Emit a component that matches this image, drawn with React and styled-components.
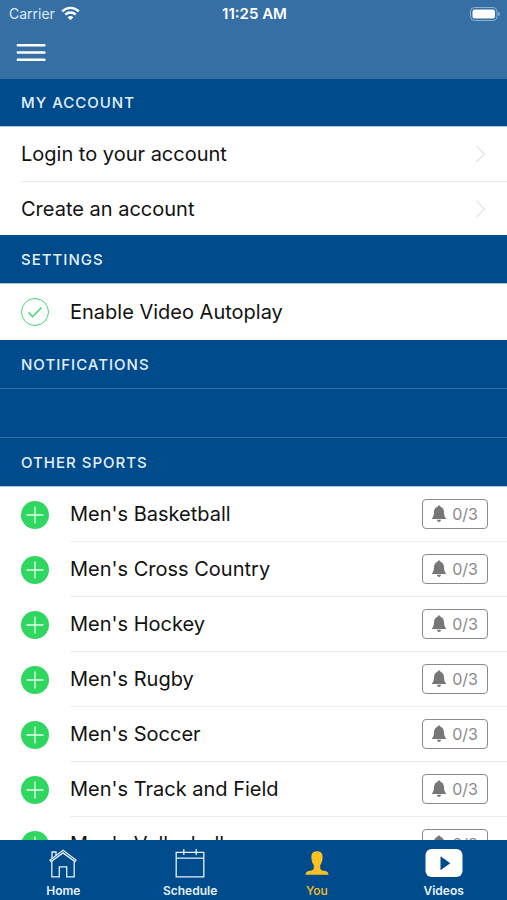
import React, { useState } from 'react'
import styled, { createGlobalStyle } from 'styled-components'

const GlobalStyle = createGlobalStyle`
  * {
    box-sizing: border-box;
  }

  body {
    margin: 0;
    font-family: Inter, 'Liberation Sans', sans-serif;
    background-color: white;
    color: #111111;
  }

  button {
    font-family: inherit;
    cursor: pointer;
  }
`

const Screen = styled.div`
  display: flex;
  flex-direction: column;
  height: 100vh;
`

const TopBar = styled.header`
  flex: none;
  background-color: #356fa4;
  color: white;
`

const StatusBar = styled.div`
  display: grid;
  grid-template-columns: 1fr auto 1fr;
  align-items: center;
  height: 27px;
  padding: 0 7px 0 9px;
  font-size: 14px;
`

const Carrier = styled.div`
  display: flex;
  align-items: center;
  gap: 6px;
  color: #dcebf8;
`

const Time = styled.div`
  font-size: 15px;
  font-weight: 600;
`

const Battery = styled.svg`
  justify-self: end;
`

const MenuButton = styled.button`
  display: block;
  padding: 16px 16px 17px;
  border: none;
  background-color: transparent;
  color: white;

  svg {
    display: block;
  }
`

const Content = styled.main`
  flex: 1;
  min-height: 0;
  overflow-y: auto;
  scrollbar-width: none;
`

const SectionTitle = styled.h2`
  display: flex;
  align-items: center;
  height: 49px;
  margin: 0;
  padding: 0 21px;
  border-bottom: 1px solid ${({ $divided }) => ($divided ? '#3470a5' : '#a9c4dc')};
  background-color: #004b8b;
  color: #e4f0fb;
  font-size: 15px;
  font-weight: 500;
  letter-spacing: 1px;

  &:first-child {
    height: 48px;
  }
`

const EmptySection = styled.div`
  height: 49px;
  border-bottom: 1px solid #3470a5;
  background-color: #004b8b;
`

const List = styled.ul`
  margin: 0;
  padding: 0;
  list-style: none;
`

const AccountItem = styled.li`
  padding-left: 21px;
`

const AccountLink = styled.a`
  display: flex;
  align-items: center;
  justify-content: space-between;
  height: 54px;
  padding-right: 21px;
  color: inherit;
  font-size: 20px;
  text-decoration: none;

  ${AccountItem} + ${AccountItem} & {
    border-top: 1px solid #e9e9ec;
  }
`

const SettingRow = styled.label`
  display: flex;
  align-items: center;
  gap: 21px;
  height: 56px;
  padding: 0 21px;
  font-size: 20px;
  cursor: pointer;
`

const CheckCircle = styled.span`
  display: grid;
  width: 28px;
  height: 28px;

  > * {
    grid-area: 1 / 1;
  }

  svg {
    pointer-events: none;
  }
`

const Checkbox = styled.input`
  appearance: none;
  width: 28px;
  height: 28px;
  margin: 0;
  border: 1px solid #3ddb6c;
  border-radius: 50%;
  cursor: pointer;

  &:not(:checked) + svg {
    visibility: hidden;
  }
`

const SportItem = styled.li`
  display: flex;
  align-items: center;
  gap: 21px;
  padding-left: 21px;
`

const AddButton = styled.button`
  flex: none;
  width: 28px;
  height: 28px;
  padding: 0;
  border: none;
  border-radius: 50%;
  background-color: #2fd760;

  svg {
    display: block;
  }
`

const SportRow = styled.div`
  display: flex;
  flex: 1;
  align-items: center;
  justify-content: space-between;
  height: 55px;
  padding-right: 19px;
  border-bottom: 1px solid #ececee;
  font-size: 20px;
`

const AlertButton = styled.button`
  display: flex;
  align-items: center;
  justify-content: space-between;
  width: 66px;
  height: 30px;
  padding: 0 9px 0 8px;
  border: 1px solid #8b8b8b;
  border-radius: 4px;
  background-color: white;
  color: #8a8a8a;
  font-size: 16px;
`

const TabBar = styled.nav`
  display: grid;
  flex: none;
  grid-template-columns: repeat(4, 1fr);
  height: 60px;
  background-color: #004b8b;
`

const Tab = styled.a`
  display: flex;
  flex-direction: column;
  align-items: center;
  gap: 5px;
  padding-top: 8px;
  color: ${({ $active }) => ($active ? '#fbc123' : '#e6f2fc')};
  font-size: 12px;
  font-weight: ${({ $active }) => ($active ? 500 : 600)};
  line-height: 16px;
  text-decoration: none;

  svg {
    height: 30px;
  }
`

const WifiIcon = () => (
  <svg width="19" height="15" viewBox="0 0 19 15" fill="none" stroke="white" strokeWidth="2.4" aria-hidden="true">
    <path d="M1.2 5.4C6 .7 13 .7 17.8 5.4" />
    <path d="M4.3 8.6C7.2 5.8 11.8 5.8 14.7 8.6" />
    <path d="M9.5 14.2L6.6 11.2Q9.5 8.8 12.4 11.2Z" fill="white" stroke="none" />
  </svg>
)

const BatteryIcon = () => (
  <Battery width="30" height="14" viewBox="0 0 30 14" aria-hidden="true">
    <rect x="0.5" y="0.5" width="26.5" height="13" rx="4" fill="none" stroke="#8fb2d1" />
    <rect x="2.5" y="2.5" width="22.5" height="9" rx="2.2" fill="white" />
    <path d="M28.2 4.8Q30 5.5 30 7T28.2 9.2Z" fill="#8fb2d1" />
  </Battery>
)

const MenuIcon = () => (
  <svg width="30" height="19" viewBox="0 0 30 19" stroke="currentColor" strokeWidth="2.4" strokeLinecap="round" aria-hidden="true">
    <path d="M1.8 2.3H28.5M1.8 9.5H28.5M1.8 16.7H28.5" />
  </svg>
)

const ChevronIcon = () => (
  <svg width="11" height="18" viewBox="0 0 11 18" fill="none" stroke="#e6e7f2" strokeWidth="1.6" aria-hidden="true">
    <path d="M1.5 1L9.5 9L1.5 17" />
  </svg>
)

const CheckIcon = () => (
  <svg width="28" height="28" viewBox="0 0 28 28" fill="none" stroke="#3ddb6c" strokeWidth="1.6" aria-hidden="true">
    <path d="M7.5 14.5L11.6 18.7L20.5 9.5" />
  </svg>
)

const PlusIcon = () => (
  <svg width="28" height="28" viewBox="0 0 28 28" stroke="#e6ffec" strokeWidth="1.3" aria-hidden="true">
    <path d="M14 5.5V22.5M5.5 14H22.5" />
  </svg>
)

const BellIcon = () => (
  <svg width="16" height="18" viewBox="0 0 16 18" fill="#777777" aria-hidden="true">
    <path d="M8 .6C8.9 .6 9.3 1.1 9.4 1.8C11.8 2.5 12.9 4.4 13 7C13.1 10.3 13.6 11.9 15 13.2V14H1V13.2C2.4 11.9 2.9 10.3 3 7C3.1 4.4 4.2 2.5 6.6 1.8C6.7 1.1 7.1 .6 8 .6Z" />
    <path d="M6 14.8H10C9.9 16.2 9.1 16.9 8 16.9S6.1 16.2 6 14.8Z" />
  </svg>
)

const HomeIcon = () => (
  <svg width="28" viewBox="0 0 28 30" fill="none" stroke="currentColor" strokeWidth="1.3" aria-hidden="true">
    <path d="M14 2.3L27 12.1L25.9 13.6L14 4.9L2.1 13.6L1 12.1Z" />
    <path d="M3 10.4V4H7V7.3" />
    <path d="M2.8 13.3V28.8H10.3V18.8H17.7V28.8H25.2V13.3" />
  </svg>
)

const CalendarIcon = () => (
  <svg width="30" viewBox="0 0 30 30" fill="none" stroke="currentColor" strokeWidth="1.3" aria-hidden="true">
    <path d="M1.2 4.3H28.8V28.8H1.2ZM1.2 10.2H28.8M8.8 1V7M21.2 1V7" />
  </svg>
)

const PersonIcon = () => (
  <svg width="24" viewBox="0 0 24 30" fill="currentColor" aria-hidden="true">
    <path d="M12 3.2C15.800 3.200 17.600 5.300 17.600 9.100C17.600 12.800 16.700 15.300 15.200 17.200V20.200C15.400 22.200 17.500 22.500 20.200 23.100C22.500 23.700 23.300 24.800 23.500 26.800H.5C.7 24.800 1.500 23.700 3.800 23.100C6.500 22.500 8.600 22.200 8.800 20.200V17.200C7.300 15.300 6.400 12.800 6.400 9.100C6.400 5.300 8.200 3.200 12 3.200Z" />
  </svg>
)

const VideoIcon = () => (
  <svg width="38" viewBox="0 0 38 30" aria-hidden="true">
    <rect x="0.5" y="1" width="37" height="28" rx="6" fill="white" />
    <path d="M15.5 8.2L25.3 15.2L15.5 22.2Z" fill="#004b8b" />
  </svg>
)

const sports = [
  "Men's Basketball",
  "Men's Cross Country",
  "Men's Hockey",
  "Men's Rugby",
  "Men's Soccer",
  "Men's Track and Field",
  "Men's Volleyball",
]

const tabs = [
  { label: 'Home', Icon: HomeIcon },
  { label: 'Schedule', Icon: CalendarIcon },
  { label: 'You', Icon: PersonIcon },
  { label: 'Videos', Icon: VideoIcon },
]

const App = () => {
  const [autoplay, setAutoplay] = useState(true)
  const [activeTab, setActiveTab] = useState('You')

  return (
    <>
      <GlobalStyle />
      <Screen>
        <TopBar>
          <StatusBar>
            <Carrier>
              Carrier
              <WifiIcon />
            </Carrier>
            <Time>11:25 AM</Time>
            <BatteryIcon />
          </StatusBar>
          <MenuButton aria-label="Menu">
            <MenuIcon />
          </MenuButton>
        </TopBar>

        <Content>
          <SectionTitle>MY ACCOUNT</SectionTitle>
          <List>
            {['Login to your account', 'Create an account'].map((label) => (
              <AccountItem key={label}>
                <AccountLink href="#">
                  {label}
                  <ChevronIcon />
                </AccountLink>
              </AccountItem>
            ))}
          </List>

          <SectionTitle>SETTINGS</SectionTitle>
          <SettingRow>
            <CheckCircle>
              <Checkbox type="checkbox" checked={autoplay} onChange={(e) => setAutoplay(e.target.checked)} />
              <CheckIcon />
            </CheckCircle>
            Enable Video Autoplay
          </SettingRow>

          <SectionTitle $divided>NOTIFICATIONS</SectionTitle>
          <EmptySection />

          <SectionTitle>OTHER SPORTS</SectionTitle>
          <List>
            {sports.map((sport) => (
              <SportItem key={sport}>
                <AddButton aria-label={`Add ${sport}`}>
                  <PlusIcon />
                </AddButton>
                <SportRow>
                  {sport}
                  <AlertButton>
                    <BellIcon />
                    0/3
                  </AlertButton>
                </SportRow>
              </SportItem>
            ))}
          </List>
        </Content>

        <TabBar>
          {tabs.map(({ label, Icon }) => (
            <Tab key={label} href="#" $active={label === activeTab} onClick={() => setActiveTab(label)}>
              <Icon />
              {label}
            </Tab>
          ))}
        </TabBar>
      </Screen>
    </>
  )
}

export default App
